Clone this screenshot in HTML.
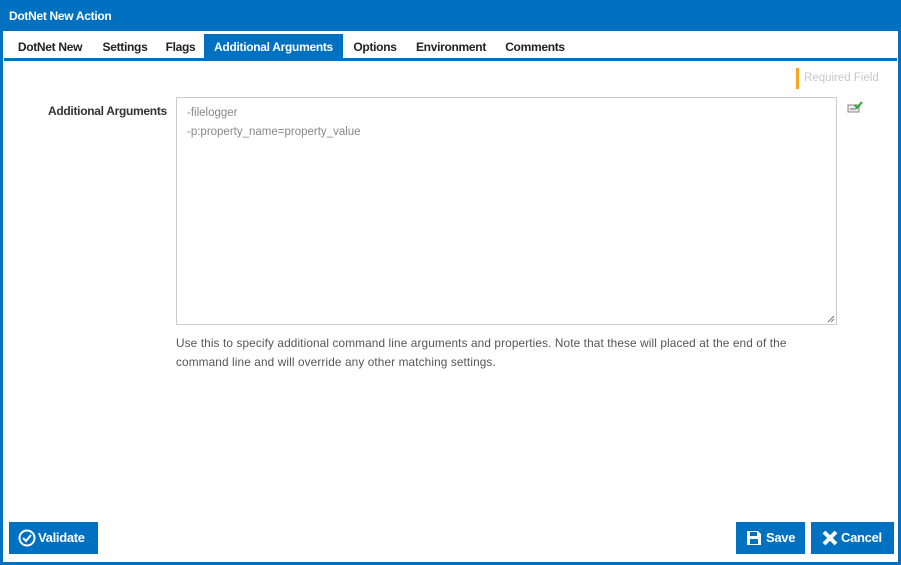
<!DOCTYPE html>
<html><head><style>
*{margin:0;padding:0;box-sizing:border-box}
body{width:901px;height:565px;background:#fff;font-family:"Liberation Sans",sans-serif;position:relative;overflow:hidden}
.frame{position:absolute;left:0;top:0;width:901px;height:565px;border:3px solid #0070c0;border-top:none}
.title{position:absolute;left:0;top:0;width:901px;height:31px;background:#0070c0;color:#fff;font-weight:bold;font-size:12px;padding:9px 0 0 9px;letter-spacing:-0.3px}
.tabs{position:absolute;left:4px;top:34px;height:24px;font-size:12px;font-weight:bold;color:#222;letter-spacing:-0.3px}
.tab{position:absolute;top:0;height:24px;line-height:26px;text-align:center}
.tab.a{background:#0070c0;color:#fff}
.line{position:absolute;left:4px;top:58px;width:893px;height:3px;background:#0070c0}
.req{position:absolute;left:796px;top:68px;height:21px;border-left:3px solid #f5a623;padding-left:5px;font-size:11.5px;color:#c8c8c8;line-height:20px}
.lbl{position:absolute;left:48px;top:104px;font-size:12px;font-weight:bold;color:#333;letter-spacing:-0.3px}
.ta{position:absolute;left:176px;top:97px;width:661px;height:228px;border:1px solid #ccc;padding:6px 10px;font-size:11.5px;color:#888;line-height:19px}
.desc{position:absolute;left:176px;top:334px;width:640px;font-size:11.8px;color:#555;line-height:19px;letter-spacing:0.12px}
.btn{position:absolute;top:522px;height:32px;background:#0070c0;color:#fff;font-weight:bold;font-size:13px;line-height:32px;letter-spacing:-0.3px}
</style></head><body>
<div class="title">DotNet New Action</div>
<div class="frame"></div>
<div class="tabs">
<div class="tab" style="left:3px;width:86px">DotNet New</div>
<div class="tab" style="left:89px;width:64px">Settings</div>
<div class="tab" style="left:153px;width:47px">Flags</div>
<div class="tab a" style="left:200px;width:139px">Additional Arguments</div>
<div class="tab" style="left:339px;width:64px">Options</div>
<div class="tab" style="left:403px;width:88px">Environment</div>
<div class="tab" style="left:491px;width:80px">Comments</div>
</div>
<div class="line"></div>
<div class="req">Required Field</div>
<div class="lbl">Additional Arguments</div>
<div class="ta">-filelogger<br>-p:property_name=property_value
<svg style="position:absolute;right:1px;bottom:1px" width="8" height="8"><path d="M7 1L1 7M7 4L4 7" stroke="#777" stroke-width="1"/></svg></div>
<svg style="position:absolute;left:847px;top:101px" width="16" height="12"><rect x="1" y="4" width="11" height="7" fill="#eee" stroke="#888"/><path d="M3 8h6" stroke="#666"/><path d="M8 4l2 3 5-6" stroke="#2a2" stroke-width="2" fill="none"/></svg>
<div class="desc">Use this to specify additional command line arguments and properties. Note that these will placed at the end of the<br>command line and will override any other matching settings.</div>
<div class="btn" style="left:9px;width:89px;padding-left:29px">Validate
<svg style="position:absolute;left:9px;top:7px" width="18" height="18"><circle cx="9" cy="9" r="7.5" fill="none" stroke="#fff" stroke-width="2"/><path d="M5 9l3 3 5-6" stroke="#fff" stroke-width="2" fill="none"/></svg></div>
<div class="btn" style="left:736px;width:69px;padding-left:30px">Save
<svg style="position:absolute;left:10px;top:8px" width="16" height="16"><path d="M1 1h11l3 3v11H1z" fill="#fff"/><rect x="4" y="2" width="7" height="4" fill="#0070c0"/><rect x="4" y="9" width="8" height="5" fill="#0070c0"/></svg></div>
<div class="btn" style="left:811px;width:83px;padding-left:30px">Cancel
<svg style="position:absolute;left:11px;top:8px" width="16" height="16"><path d="M2 2l12 12M14 2L2 14" stroke="#fff" stroke-width="4"/></svg></div>
</body></html>
